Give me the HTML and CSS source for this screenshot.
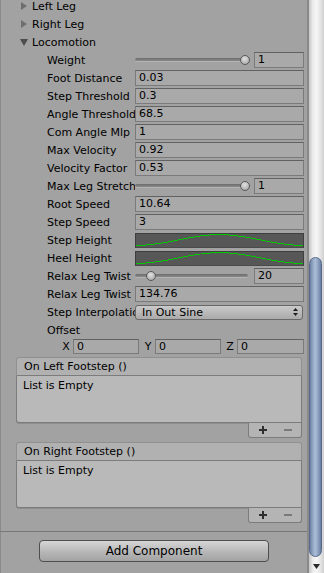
FILE: index.html
```html
<!DOCTYPE html>
<html>
<head>
<meta charset="utf-8">
<link rel="stylesheet" href="styles.css">
</head>
<body>
<div class="window">
  <div class="content">
    <div class="rows">
      <div class="row fold"><svg class="tri" width="6" height="8" viewBox="0 0 6 8"><polygon points="0,0 6,4 0,8" fill="#6e6e6e"/></svg><span>Left Leg</span></div>
      <div class="row fold"><svg class="tri" width="6" height="8" viewBox="0 0 6 8"><polygon points="0,0 6,4 0,8" fill="#6e6e6e"/></svg><span>Right Leg</span></div>
      <div class="row fold"><svg class="tri open" width="8" height="7" viewBox="0 0 8 7"><polygon points="0,0 8,0 4,7" fill="#4e4e4e"/></svg><span>Locomotion</span></div>

      <div class="row prop"><span class="label">Weight</span>
        <div class="slider"><div class="track"></div><div class="thumb" style="left:105px"></div></div>
        <div class="field num">1</div></div>
      <div class="row prop"><span class="label">Foot Distance</span><div class="field">0.03</div></div>
      <div class="row prop"><span class="label">Step Threshold</span><div class="field">0.3</div></div>
      <div class="row prop"><span class="label">Angle Threshold</span><div class="field">68.5</div></div>
      <div class="row prop"><span class="label">Com Angle Mlp</span><div class="field">1</div></div>
      <div class="row prop"><span class="label">Max Velocity</span><div class="field">0.92</div></div>
      <div class="row prop"><span class="label">Velocity Factor</span><div class="field">0.53</div></div>
      <div class="row prop"><span class="label">Max Leg Stretch</span>
        <div class="slider"><div class="track"></div><div class="thumb" style="left:105px"></div></div>
        <div class="field num">1</div></div>
      <div class="row prop"><span class="label">Root Speed</span><div class="field">10.64</div></div>
      <div class="row prop"><span class="label">Step Speed</span><div class="field">3</div></div>
      <div class="row prop"><span class="label">Step Height</span>
        <div class="curve"><svg width="100%" height="100%" viewBox="0 0 167 13" preserveAspectRatio="none"><path d="M0 11.5 C 32 11.5, 52 0.5, 83.5 0.5 C 115 0.5, 135 11.5, 167 11.5" fill="none" stroke="#00c800" stroke-width="1"/></svg></div></div>
      <div class="row prop"><span class="label">Heel Height</span>
        <div class="curve"><svg width="100%" height="100%" viewBox="0 0 167 13" preserveAspectRatio="none"><path d="M0 11.5 C 32 11.5, 52 0.5, 83.5 0.5 C 115 0.5, 135 11.5, 167 11.5" fill="none" stroke="#00c800" stroke-width="1"/></svg></div></div>
      <div class="row prop"><span class="label">Relax Leg Twist</span>
        <div class="slider"><div class="track"></div><div class="thumb" style="left:11px"></div></div>
        <div class="field num">20</div></div>
      <div class="row prop"><span class="label">Relax Leg Twist</span><div class="field">134.76</div></div>
      <div class="row prop"><span class="label">Step Interpolation</span>
        <div class="popup"><span>In Out Sine</span><svg width="5" height="8" viewBox="0 0 5 8"><polygon points="2.5,0 5,3 0,3" fill="#1e1e1e"/><polygon points="0,5 5,5 2.5,8" fill="#1e1e1e"/></svg></div></div>
      <div class="row prop"><span class="label">Offset</span></div>
      <div class="xyz">
        <span class="axis">X</span><div class="field small">0</div>
        <span class="axis">Y</span><div class="field small">0</div>
        <span class="axis">Z</span><div class="field small last">0</div>
      </div>
    </div>

    <div class="event first">
      <div class="ev-head">On Left Footstep ()</div>
      <div class="ev-body">List is Empty</div>
      <div class="ev-foot">
        <span class="btn"><svg width="8" height="8" viewBox="0 0 8 8"><rect x="3" y="0" width="2" height="8" fill="#2e2e2e"/><rect x="0" y="3" width="8" height="2" fill="#2e2e2e"/></svg></span>
        <span class="btn"><svg width="8" height="8" viewBox="0 0 8 8"><rect x="0" y="3" width="8" height="2" fill="#7a7a7a"/></svg></span>
      </div>
    </div>
    <div class="event">
      <div class="ev-head">On Right Footstep ()</div>
      <div class="ev-body">List is Empty</div>
      <div class="ev-foot">
        <span class="btn"><svg width="8" height="8" viewBox="0 0 8 8"><rect x="3" y="0" width="2" height="8" fill="#2e2e2e"/><rect x="0" y="3" width="8" height="2" fill="#2e2e2e"/></svg></span>
        <span class="btn"><svg width="8" height="8" viewBox="0 0 8 8"><rect x="0" y="3" width="8" height="2" fill="#7a7a7a"/></svg></span>
      </div>
    </div>

    <div class="separator"></div>
    <div class="add-wrap"><button class="add">Add Component</button></div>
  </div>
  <div class="scrollbar">
    <div class="sthumb"></div>
    <div class="sarrow"><svg width="7" height="5" viewBox="0 0 7 5"><polygon points="0,0 7,0 3.5,5" fill="#2a2a2a"/></svg></div>
  </div>
</div>
</body>
</html>
```

FILE: styles.css
```css
* { box-sizing: border-box; }
html, body { margin: 0; padding: 0; }
body {
  width: 324px;
  height: 573px;
  overflow: hidden;
  background: #a2a2a2;
  font-family: "DejaVu Sans", sans-serif;
  font-size: 11px;
  color: #000;
}
.window { display: flex; height: 573px; }
.content {
  width: 307px;
  border-left: 1px solid #8a8a8a;
  display: flex;
  flex-direction: column;
}
.rows { margin-top: -3px; }
.row {
  height: 18px;
  display: flex;
  align-items: center;
  padding-right: 3px;
  white-space: nowrap;
}
.fold { padding-left: 20px; }
.fold .tri { margin-right: 5px; flex: none; }
.fold .tri.open { margin-left: -1px; margin-right: 4px; }
.prop { padding-left: 46px; }
.label {
  width: 88px;
  flex: none;
  overflow: hidden;
  white-space: nowrap;
}
.field {
  flex: 1;
  height: 16px;
  background: #a9a9a9;
  border: 1px solid #7a7a7a;
  border-top-color: #626262;
  padding-left: 3px;
  line-height: 14px;
}
.field.num { flex: none; width: 50px; margin-left: 6px; }
.slider {
  flex: 1;
  position: relative;
  height: 16px;
  display: flex;
  align-items: center;
}
.track {
  width: 100%;
  height: 4px;
  border-radius: 2px;
  background: linear-gradient(#6c6c6c, #8a8a8a);
  border-bottom: 1px solid #b4b4b4;
}
.thumb {
  position: absolute;
  top: 3px;
  width: 10px;
  height: 10px;
  border-radius: 50%;
  border: 1px solid #595959;
  background: radial-gradient(circle at 45% 35%, #e2e2e2, #b8b8b8 60%, #9c9c9c);
}
.curve {
  flex: 1;
  height: 15px;
  background: #575757;
  border: 1px solid #3e3e3e;
  border-bottom-color: #4a4a4a;
}
.curve svg { display: block; shape-rendering: crispEdges; }
.popup {
  flex: 1;
  height: 15px;
  margin-right: 1px;
  border: 1px solid #686868;
  border-radius: 3px;
  background: linear-gradient(#c9c9c9, #aaaaaa);
  display: flex;
  align-items: center;
  justify-content: space-between;
  padding: 0 4px 0 6px;
  line-height: 13px;
}
.xyz {
  height: 16px;
  display: flex;
  align-items: flex-start;
  padding-left: 58px;
  padding-right: 3px;
}
.axis { width: 14px; flex: none; text-align: center; line-height: 15px; }
.field.small { flex: none; width: 66px; height: 15px; line-height: 13px; margin-right: 2px; }
.field.small.last { flex: 1; margin-right: 0; }

.event {
  margin: 4px 5px 0 15px;
  display: flex;
  flex-direction: column;
}
.event.first { margin-top: 2px; }
.ev-head {
  height: 19px;
  background: #b1b1b1;
  border: 1px solid #909090;
  border-bottom-color: #7c7c7c;
  border-radius: 3px 3px 0 0;
  padding-left: 7px;
  line-height: 17px;
}
.ev-body {
  height: 47px;
  background: #b9b9b9;
  border: 1px solid #7c7c7c;
  border-top: none;
  border-radius: 0 0 0 3px;
  padding: 3px 6px;
  line-height: 14px;
  box-shadow: 0 1px 0 #8e8e8e;
}
.ev-foot {
  align-self: flex-end;
  width: 54px;
  height: 15px;
  background: #b4b4b4;
  border: 1px solid #7c7c7c;
  border-top: none;
  border-radius: 0 0 3px 3px;
  display: flex;
  padding-left: 1px;
}
.btn {
  width: 25px;
  display: flex;
  align-items: center;
  justify-content: center;
}
.btn svg { display: block; }
.separator {
  margin-top: 8px;
  height: 1px;
  background: #777;
  margin-left: -1px;
}
.add-wrap { padding: 8px 0 0 38px; }
.add {
  width: 230px;
  height: 22px;
  border: 1px solid #4e4e4e;
  border-radius: 4px;
  background: linear-gradient(#d6d6d6, #b4b4b4 60%, #a3a3a3);
  font-family: "DejaVu Sans", sans-serif;
  font-size: 12px;
  color: #000;
  padding: 0;
  display: block;
}

.scrollbar {
  width: 17px;
  border-left: 2px solid #8a8a8a;
  background: linear-gradient(90deg, #c4c4c4 0%, #ececec 25%, #f6f6f6 50%, #e2e2e2 80%, #cfcfcf 100%);
  display: flex;
  flex-direction: column;
  align-items: flex-start;
}
.sthumb {
  margin-top: 257px;
  width: 13px;
  height: 300px;
  border-radius: 6.5px;
  border: 1px solid #56698a;
  background: linear-gradient(90deg, #6d82a4 0%, #9fb2ce 35%, #a9bbd5 50%, #8599b9 80%, #697e9f 100%);
}
.sarrow {
  flex: 1;
  width: 15px;
  display: flex;
  align-items: center;
  justify-content: center;
}
.sarrow svg { display: block; margin-top: 3px; }
```
